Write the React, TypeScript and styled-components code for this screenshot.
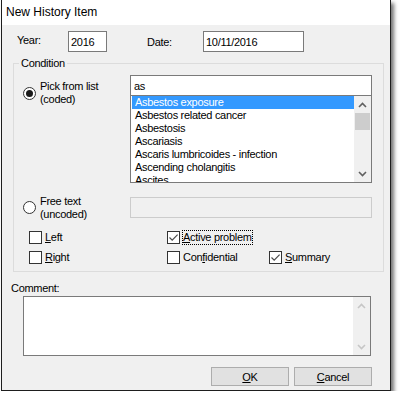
import styled, { createGlobalStyle } from "styled-components";

const GlobalStyle = createGlobalStyle`
  html, body {
    margin: 0;
    background: #fff;
  }
  body {
    font-family: "Liberation Sans", Arial, sans-serif;
    font-size: 11px;
    letter-spacing: -0.3px;
    color: #000;
  }
`;

const conditions = [
  "Asbestos exposure",
  "Asbestos related cancer",
  "Asbestosis",
  "Ascariasis",
  "Ascaris lumbricoides - infection",
  "Ascending cholangitis",
  "Ascites",
];

function Chevron({ up, disabled }: { up?: boolean; disabled?: boolean }) {
  return <svg width="9" height="6" viewBox="0 0 9 6">
    <path
      d={up ? "M1 5 L4.5 1.5 L8 5" : "M1 1 L4.5 4.5 L8 1"}
      fill="none"
      stroke={disabled ? "#c6c6c6" : "#606060"}
      strokeWidth="1.6"
    />
  </svg>;
}

function Check() {
  return <svg width="11" height="11" viewBox="0 0 11 11">
    <path d="M1.5 5.5 L4.2 8.2 L9.6 2.6" fill="none" stroke="#4d4d4d" strokeWidth="1.2" />
  </svg>;
}

interface CheckProps {
  label: React.ReactNode;
  checked?: boolean;
  focused?: boolean;
}
function CheckOption(props: CheckProps) {
  return <CheckItem>
    <CheckBox>{props.checked && <Check />}</CheckBox>
    <CheckText $focused={props.focused}>{props.label}</CheckText>
  </CheckItem>;
}

function RadioOption({ checked, lines }: { checked?: boolean; lines: string[] }) {
  return <RadioItem>
    <RadioCircle>{checked && <RadioDot />}</RadioCircle>
    <OptionText>{lines.map(l => <div key={l}>{l}</div>)}</OptionText>
  </RadioItem>;
}

export default function App() {
  return <>
    <GlobalStyle />
    <Window>
      <TitleBar>New History Item</TitleBar>
      <Body>
        <TopRow>
          <FieldLabel $width={51} $top={3}>Year:</FieldLabel>
          <TextBox $width={39} readOnly defaultValue="2016" />
          <FieldLabel $width={56} $top={5} $gap={40}>Date:</FieldLabel>
          <TextBox $width={101} readOnly defaultValue="10/11/2016" />
        </TopRow>

        <GroupBox>
          <GroupLegend>Condition</GroupLegend>
          <ConditionGrid>
            <PickRadio>
              <RadioOption checked lines={["Pick from list", "(coded)"]} />
            </PickRadio>
            <Picker>
              <SearchBox readOnly defaultValue="as" />
              <ListBox>
                <ListItems>
                  {conditions.map((c, i) =>
                    <ListItem key={c} $selected={i === 0}>{c}</ListItem>
                  )}
                </ListItems>
                <ScrollBar>
                  <ScrollButton><Chevron up /></ScrollButton>
                  <ScrollThumb />
                  <ScrollTrack />
                  <ScrollButton><Chevron /></ScrollButton>
                </ScrollBar>
              </ListBox>
            </Picker>

            <FreeRadio>
              <RadioOption lines={["Free text", "(uncoded)"]} />
            </FreeRadio>
            <DisabledBox />

            <CheckGrid>
              <CheckOption label={<><u>L</u>eft</>} />
              <CheckOption label={<><u>A</u>ctive problem</>} checked focused />
              <span />
              <CheckOption label={<><u>R</u>ight</>} />
              <CheckOption label={<>Con<u>f</u>idential</>} />
              <CheckOption label={<><u>S</u>ummary</>} checked />
            </CheckGrid>
          </ConditionGrid>
        </GroupBox>

        <CommentLabel>Comment:</CommentLabel>
        <CommentBox>
          <ScrollBar>
            <ScrollButton><Chevron up disabled /></ScrollButton>
            <ScrollTrack />
            <ScrollButton><Chevron disabled /></ScrollButton>
          </ScrollBar>
        </CommentBox>

        <ButtonRow>
          <Button><u>O</u>K</Button>
          <Button><u>C</u>ancel</Button>
        </ButtonRow>
      </Body>
    </Window>
  </>;
}

const Window = styled.div`
  width: 390px;
  margin-left: 1px;
  box-sizing: border-box;
  border: 1px solid #1e1e1e;
  border-top: none;
  background: #f0f0f0;
  box-shadow: 3px 3px 4px rgba(0, 0, 0, 0.55);
`;

const TitleBar = styled.div`
  height: 25px;
  line-height: 25px;
  padding-left: 4px;
  background: #fff;
  font-size: 12px;
  letter-spacing: 0;
`;

const Body = styled.div`
  display: flex;
  flex-direction: column;
  padding: 6px 0 4px;
`;

const TopRow = styled.div`
  display: flex;
  align-items: flex-start;
  height: 21px;
  margin-left: 15px;
`;

const FieldLabel = styled.div<{ $width: number; $top: number; $gap?: number }>`
  width: ${p => p.$width}px;
  margin-left: ${p => p.$gap ?? 0}px;
  padding-top: ${p => p.$top}px;
  line-height: 13px;
`;

const TextBox = styled.input<{ $width: number }>`
  width: ${p => p.$width}px;
  height: 21px;
  box-sizing: border-box;
  margin: 0;
  padding: 0 2px;
  border: 1px solid #7a7a7a;
  background: #fff;
  font: inherit;
  letter-spacing: inherit;
  color: #000;
  outline: none;
`;

const GroupBox = styled.fieldset`
  width: 371px;
  box-sizing: border-box;
  margin: 4px 0 0 11px;
  padding: 5px 0 6px 9px;
  border: 1px solid #dcdcdc;
  min-width: 0;
`;

const GroupLegend = styled.legend`
  margin-left: -4px;
  padding: 0 2px;
  line-height: 14px;
`;

const ConditionGrid = styled.div`
  display: grid;
  grid-template-columns: 107px 242px;
`;

const PickRadio = styled.div`
  align-self: start;
  margin-top: 5px;
`;

const FreeRadio = styled.div`
  height: 21px;
  margin-top: 14px;
  display: flex;
  align-items: center;
`;

const RadioItem = styled.div`
  display: flex;
  align-items: center;
`;

const RadioCircle = styled.span`
  width: 13px;
  height: 13px;
  box-sizing: border-box;
  border: 1px solid #333;
  border-radius: 50%;
  background: #fff;
  display: flex;
  align-items: center;
  justify-content: center;
  margin-right: 4px;
`;

const RadioDot = styled.span`
  width: 7px;
  height: 7px;
  border-radius: 50%;
  background: #1a1a1a;
`;

const OptionText = styled.div`
  line-height: 13px;
`;

const Picker = styled.div`
  display: flex;
  flex-direction: column;
`;

const SearchBox = styled(TextBox)`
  width: 242px;
  padding-left: 3px;
`;

const ListBox = styled.div`
  display: flex;
  height: 86px;
  border: 1px solid #7a7a7a;
  border-top: none;
  background: #fff;
`;

const ListItems = styled.div`
  flex: 1;
  overflow: hidden;
  padding-left: 1px;
`;

const ListItem = styled.div<{ $selected?: boolean }>`
  height: 13px;
  line-height: 13px;
  padding-left: 3px;
  white-space: nowrap;
  background: ${p => p.$selected ? "#3399ff" : "transparent"};
  color: ${p => p.$selected ? "#fff" : "#000"};
`;

const ScrollBar = styled.div`
  width: 17px;
  display: flex;
  flex-direction: column;
  background: #f0f0f0;
`;

const ScrollButton = styled.div`
  height: 17px;
  display: flex;
  align-items: center;
  justify-content: center;
`;

const ScrollThumb = styled.div`
  height: 17px;
  margin: 0 1px;
  background: #cdcdcd;
`;

const ScrollTrack = styled.div`
  flex: 1;
`;

const DisabledBox = styled.div`
  height: 21px;
  box-sizing: border-box;
  margin-top: 14px;
  border: 1px solid #cccccc;
  background: #f0f0f0;
`;

const CheckGrid = styled.div`
  grid-column: 1 / -1;
  display: grid;
  grid-template-columns: 138px 102px auto;
  grid-auto-rows: 15px;
  row-gap: 5px;
  margin: 12px 0 0 6px;
`;

const CheckItem = styled.div`
  display: flex;
  align-items: center;
`;

const CheckBox = styled.span`
  width: 13px;
  height: 13px;
  box-sizing: border-box;
  border: 1px solid #333;
  background: #fff;
  display: flex;
  align-items: center;
  justify-content: center;
  margin-right: 2px;
`;

const CheckText = styled.span<{ $focused?: boolean }>`
  line-height: 13px;
  border: 1px ${p => p.$focused ? "dotted #000" : "solid transparent"};
  white-space: nowrap;
`;

const CommentLabel = styled.div`
  margin: 9px 0 0 9px;
  line-height: 14px;
`;

const CommentBox = styled.div`
  width: 348px;
  height: 60px;
  box-sizing: border-box;
  margin: 1px 0 0 21px;
  border: 1px solid #7a7a7a;
  background: #fff;
  display: flex;
  justify-content: flex-end;
`;

const ButtonRow = styled.div`
  display: flex;
  justify-content: flex-end;
  gap: 5px;
  margin: 11px 18px 0 0;
`;

const Button = styled.div`
  width: 78px;
  height: 19px;
  box-sizing: border-box;
  border: 1px solid #adadad;
  background: #e1e1e1;
  display: flex;
  align-items: center;
  justify-content: center;
`;
